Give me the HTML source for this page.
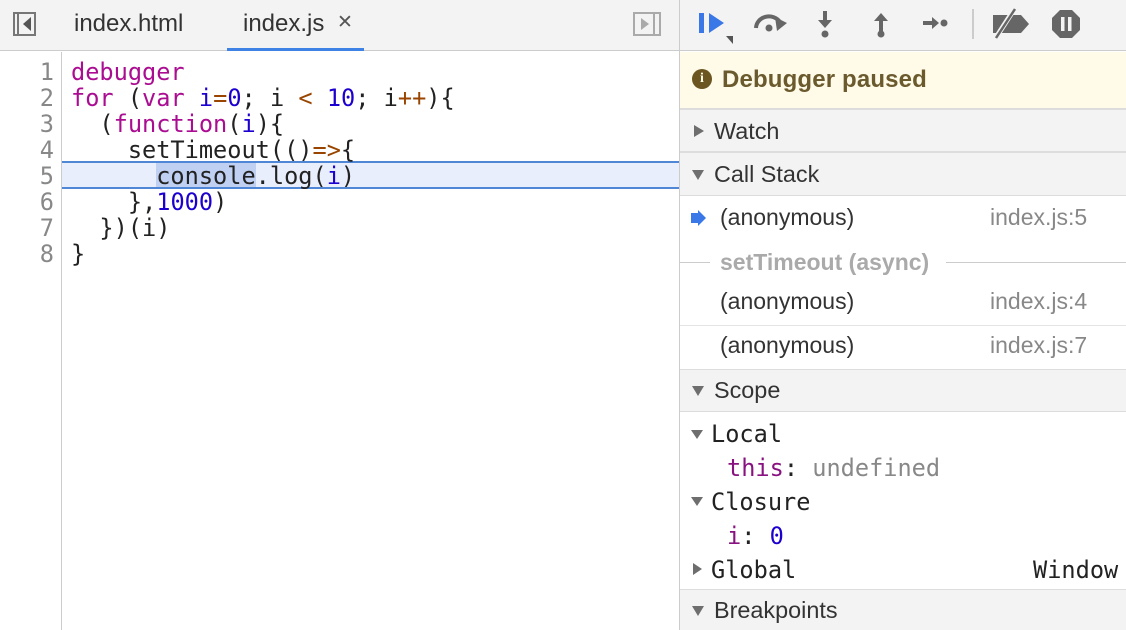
<!DOCTYPE html>
<html><head><meta charset="utf-8"><style>
*{margin:0;padding:0;box-sizing:border-box}
body{width:1126px;height:630px;overflow:hidden;background:#fff;font-family:"Liberation Sans",sans-serif;position:relative;color:#222}
.abs{position:absolute}
.mono{font-family:"DejaVu Sans Mono",monospace;font-size:23.6px}
.code div{position:absolute;left:71px;height:26px;line-height:26px;white-space:pre}
.ln div{position:absolute;width:54px;text-align:right;height:26px;line-height:26px;color:#888}
.k{color:#aa0d91}.n{color:#1c00cf}.v{color:#1c00cf}.o{color:#994500}.p{color:#881280}
.hdr{position:absolute;left:680px;width:446px;background:#f3f3f3;border-top:1px solid #ddd;border-bottom:1px solid #ddd;font-size:23.4px;color:#333}
.hdr span.t{position:absolute;left:34px}
.tri{position:absolute;left:12px;width:0;height:0}
.down{border-left:6px solid transparent;border-right:6px solid transparent;border-top:10px solid #6e6e6e}
.right{border-top:6px solid transparent;border-bottom:6px solid transparent;border-left:10px solid #6e6e6e}
.row{position:absolute;left:720px;font-size:23px;color:#333}
.loc{position:absolute;left:990px;font-size:23px;color:#888}
</style></head><body>
<div class="abs" style="left:0;top:0;width:679px;height:51px;background:#f3f3f3;border-bottom:1px solid #ccc"></div>
<div class="abs" style="left:13px;top:12px;width:23px;height:24px;border:2px solid #777"></div>
<div class="abs" style="left:17px;top:14px;width:2px;height:20px;background:#777"></div>
<div class="abs" style="left:23px;top:17px;border-top:7px solid transparent;border-bottom:7px solid transparent;border-right:8px solid #555"></div>
<div class="abs" style="left:74px;top:10px;font-size:24px;color:#333">index.html</div>
<div class="abs" style="left:243px;top:10px;font-size:24px;color:#333">index.js</div>
<div class="abs" style="left:337px;top:11px;font-size:19px;color:#555">✕</div>
<div class="abs" style="left:227px;top:48px;width:137px;height:3px;background:#3e82e6"></div>
<div class="abs" style="left:633px;top:12px;width:28px;height:24px;border:2px solid #aaa"></div>
<div class="abs" style="left:653px;top:14px;width:2px;height:20px;background:#aaa"></div>
<div class="abs" style="left:641px;top:18px;border-top:6px solid transparent;border-bottom:6px solid transparent;border-left:8px solid #aaa"></div>
<div class="abs" style="left:61px;top:52px;width:1px;height:578px;background:#ccc"></div>
<div class="abs" style="left:62px;top:161px;width:617px;height:28px;background:#e8eefc;border-top:2px solid #4f86d6;border-bottom:2px solid #4f86d6"></div>
<div class="abs" style="left:156px;top:163px;width:100px;height:24px;background:#bfd0f2"></div>
<div class="ln mono">
<div style="top:59px">1</div><div style="top:85px">2</div><div style="top:111px">3</div><div style="top:137px">4</div><div style="top:163px">5</div><div style="top:189px">6</div><div style="top:215px">7</div><div style="top:241px">8</div></div>
<div class="code mono">
<div style="top:59px"><span class="k">debugger</span></div>
<div style="top:85px"><span class="k">for</span> (<span class="k">var</span> <span class="n">i</span><span class="o">=</span><span class="v">0</span>; i <span class="o">&lt;</span> <span class="v">10</span>; i<span class="o">++</span>){</div>
<div style="top:111px">  (<span class="k">function</span>(<span class="n">i</span>){</div>
<div style="top:137px">    setTimeout(()<span class="o">=&gt;</span>{</div>
<div style="top:163px">      console.log(<span class="n">i</span>)</div>
<div style="top:189px">    },<span class="v">1000</span>)</div>
<div style="top:215px">  })(i)</div>
<div style="top:241px">}</div>
</div>
<div class="abs" style="left:679px;top:0;width:1px;height:630px;background:#ccc"></div>
<div class="abs" style="left:680px;top:0;width:446px;height:51px;background:#f3f3f3;border-bottom:1px solid #ccc"></div>
<svg class="abs" style="left:680px;top:0" width="446" height="51">
<rect x="19" y="13" width="5" height="20" fill="#3b78e7"/>
<path d="M29 13 L44 23 L29 33Z" fill="#3b78e7"/>
<path d="M46 36 L53 36 L53 44Z" fill="#555"/>
<path d="M76 28 A13 12 0 0 1 100 22" stroke="#666" stroke-width="4" fill="none"/>
<path d="M95 17 L107 23 L97 31Z" fill="#666"/><circle cx="89" cy="28" r="3.5" fill="#666"/>
<path d="M145 11 L145 24" stroke="#666" stroke-width="4"/><path d="M138 20 L152 20 L145 28Z" fill="#666"/><circle cx="145" cy="34" r="3.5" fill="#666"/>
<path d="M201 20 L201 32" stroke="#666" stroke-width="4"/><path d="M194 21 L208 21 L201 13Z" fill="#666"/><circle cx="201" cy="34" r="3.5" fill="#666"/>
<path d="M243 23 L254 23" stroke="#666" stroke-width="4"/><path d="M252 17 L259 23 L252 29Z" fill="#666"/><circle cx="264" cy="23" r="3.5" fill="#666"/>
<rect x="292" y="9" width="2" height="30" fill="#ccc"/>
<path d="M313 15 L341 15 L349 24 L341 33 L313 33Z" fill="#666"/><path d="M315 39 L335 8" stroke="#f3f3f3" stroke-width="5"/><path d="M316 38 L335 9" stroke="#666" stroke-width="2.5"/>
<path d="M380 10 L392 10 L400 18 L400 30 L392 38 L380 38 L372 30 L372 18Z" fill="#666"/>
<rect x="381" y="17" width="3.5" height="14" fill="#f3f3f3"/><rect x="388" y="17" width="3.5" height="14" fill="#f3f3f3"/>
</svg>
<div class="abs" style="left:680px;top:52px;width:446px;height:57px;background:#fffbe8;border-bottom:1px solid #ddd"></div>
<div class="abs" style="left:692px;top:69px;width:20px;height:20px;border-radius:50%;background:#6b5520;color:#fffbe8;font-size:14px;font-weight:bold;text-align:center;line-height:20px;font-family:'Liberation Serif',serif">i</div>
<div class="abs" style="left:722px;top:66px;font-size:24px;font-weight:bold;color:#6b5a2e;letter-spacing:0.15px">Debugger paused</div>
<div class="hdr" style="top:109px;height:43px"><div class="tri right" style="top:15px;left:14px"></div><span class="t" style="top:8px">Watch</span></div>
<div class="hdr" style="top:152px;height:44px"><div class="tri down" style="top:17px"></div><span class="t" style="top:8px">Call Stack</span></div>
<svg class="abs" style="left:690px;top:209px" width="18" height="18"><path d="M1 4 L8 4 L8 1 L16 9 L8 17 L8 14 L1 14Z" fill="#3b78e7"/></svg>
<div class="row" style="top:204px">(anonymous)</div><div class="loc" style="top:204px">index.js:5</div>
<div class="abs" style="left:680px;top:262px;width:30px;height:1px;background:#ccc"></div>
<div class="abs" style="left:946px;top:262px;width:180px;height:1px;background:#ccc"></div>
<div class="abs" style="left:720px;top:249px;font-size:23px;font-weight:bold;color:#aaa">setTimeout (async)</div>
<div class="row" style="top:288px">(anonymous)</div><div class="loc" style="top:288px">index.js:4</div>
<div class="abs" style="left:680px;top:325px;width:446px;height:1px;background:#e4e4e4"></div>
<div class="row" style="top:332px">(anonymous)</div><div class="loc" style="top:332px">index.js:7</div>
<div class="hdr" style="top:369px;height:43px"><div class="tri down" style="top:16px"></div><span class="t" style="top:7px">Scope</span></div>
<div class="abs" style="left:691px;top:430px;border-left:6px solid transparent;border-right:6px solid transparent;border-top:9px solid #6e6e6e"></div>
<div class="abs mono" style="left:711px;top:420px;color:#222">Local</div>
<div class="abs mono" style="left:727px;top:454px"><span class="p">this</span>: <span style="color:#888">undefined</span></div>
<div class="abs" style="left:691px;top:497px;border-left:6px solid transparent;border-right:6px solid transparent;border-top:9px solid #6e6e6e"></div>
<div class="abs mono" style="left:711px;top:488px;color:#222">Closure</div>
<div class="abs mono" style="left:727px;top:522px"><span class="p">i</span>: <span class="v">0</span></div>
<div class="abs" style="left:693px;top:563px;border-top:6px solid transparent;border-bottom:6px solid transparent;border-left:9px solid #6e6e6e"></div>
<div class="abs mono" style="left:711px;top:556px;color:#222">Global</div>
<div class="abs mono" style="left:1033px;top:556px;color:#222">Window</div>
<div class="hdr" style="top:589px;height:41px;border-bottom:none"><div class="tri down" style="top:16px"></div><span class="t" style="top:7px">Breakpoints</span></div>
</body></html>
